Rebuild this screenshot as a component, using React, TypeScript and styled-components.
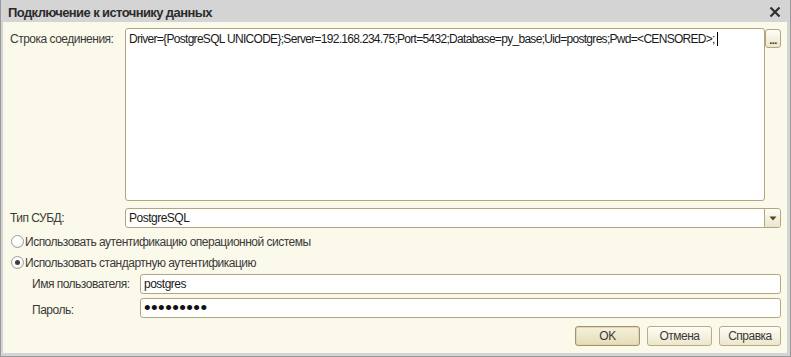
import React from 'react';
import styled, { createGlobalStyle } from 'styled-components';

const GlobalStyle = createGlobalStyle`
  html, body {
    margin: 0;
    padding: 0;
    background: #fbf9ea;
  }
  body {
    font-family: 'Liberation Sans', Arial, sans-serif;
    font-size: 12px;
    letter-spacing: -0.5px;
    color: #333333;
  }
`;

const connectionString =
  'Driver={PostgreSQL UNICODE};Server=192.168.234.75;Port=5432;Database=py_base;Uid=postgres;Pwd=<CENSORED>;';

const App = () => {
  return (
    <>
      <GlobalStyle />
      <Window>
        <TitleBar>
          <Title>Подключение к источнику данных</Title>
          <CloseButton aria-label="close">
            <svg width="12" height="12" viewBox="0 0 12 12">
              <path d="M1.5 1.5 L10.5 10.5 M10.5 1.5 L1.5 10.5" stroke="#2f2f2f" strokeWidth="2.2" />
            </svg>
          </CloseButton>
        </TitleBar>
        <Body>
          <Row>
            <Label $width={115} $top={4}>Строка соединения:</Label>
            <TextArea>
              {connectionString}
              <Caret />
            </TextArea>
            <SideButton>...</SideButton>
          </Row>

          <Row $mt={7}>
            <Label $width={115} $top={3}>Тип СУБД:</Label>
            <Select>
              <SelectValue>PostgreSQL</SelectValue>
              <DropButton>
                <svg width="8" height="5" viewBox="0 0 8 5">
                  <path d="M0.5 0.5 L7.5 0.5 L4 4.5 Z" fill="#5c430c" />
                </svg>
              </DropButton>
            </Select>
          </Row>

          <RadioRow $mt={6}>
            <Radio />
            Использовать аутентификацию операционной системы
          </RadioRow>
          <RadioRow $mt={6}>
            <Radio $checked />
            Использовать стандартную аутентификацию
          </RadioRow>

          <Row $mt={4} $indent={22}>
            <Label $width={108} $top={3}>Имя пользователя:</Label>
            <Input>postgres</Input>
          </Row>
          <Row $mt={4} $indent={22}>
            <Label $width={108} $top={5}>Пароль:</Label>
            <Input>
              <Dots>•••••••••</Dots>
            </Input>
          </Row>

          <ButtonBar>
            <DialogButton $default $width={65}>OK</DialogButton>
            <DialogButton $width={65}>Отмена</DialogButton>
            <DialogButton $width={62}>Справка</DialogButton>
          </ButtonBar>
        </Body>
      </Window>
    </>
  );
};

const Window = styled.div`
  width: 791px;
  height: 357px;
  box-sizing: border-box;
  display: flex;
  flex-direction: column;
  background: #d4d4d4;
  border-left: 1px solid #9a9a9a;
  border-right: 1px solid #9a9a9a;
  border-bottom: 1px solid #9a9a9a;
  overflow: hidden;
`;

const TitleBar = styled.div`
  height: 22px;
  flex: none;
  display: flex;
  align-items: center;
  justify-content: space-between;
  padding: 0 8px 0 7px;
  background: #d4d4d4;
`;

const Title = styled.div`
  font-weight: bold;
  font-size: 13px;
  letter-spacing: -0.6px;
  color: #2b2b2b;
  padding-top: 2px;
`;

const CloseButton = styled.div`
  width: 14px;
  height: 14px;
  display: flex;
  align-items: center;
  justify-content: center;
  margin-top: 2px;
`;

const Body = styled.div`
  flex: 1;
  display: flex;
  flex-direction: column;
  margin: 0 3px 3px 2px;
  padding: 6px 6px 0 7px;
  background: #fbf9ea;
`;

const Row = styled.div<{ $mt?: number; $indent?: number }>`
  display: flex;
  align-items: flex-start;
  margin-top: ${(p) => p.$mt ?? 0}px;
  padding-left: ${(p) => p.$indent ?? 0}px;
`;

const Label = styled.div<{ $width: number; $top: number }>`
  width: ${(p) => p.$width}px;
  flex: none;
  padding-top: ${(p) => p.$top}px;
  line-height: 14px;
  color: #3a3a3a;
  white-space: nowrap;
`;

const fieldBox = `
  box-sizing: border-box;
  background: #ffffff;
  border: 1px solid #b3a67e;
  border-radius: 3px;
  color: #1a1a1a;
  line-height: 14px;
`;

const TextArea = styled.div`
  ${fieldBox}
  width: 640px;
  height: 173px;
  padding: 3px 3px;
  white-space: nowrap;
  overflow: hidden;
  letter-spacing: -0.7px;
`;

const Caret = styled.span`
  display: inline-block;
  width: 1px;
  height: 14px;
  margin-left: 2px;
  vertical-align: -3px;
  background: #000000;
`;

const smallButton = `
  box-sizing: border-box;
  border: 1px solid #b3a67e;
  border-radius: 3px;
  background: linear-gradient(#fefdf7, #ebe5cc);
  display: flex;
  align-items: center;
  justify-content: center;
`;

const SideButton = styled.div`
  ${smallButton}
  width: 16px;
  height: 19px;
  margin-top: 1px;
  font-weight: bold;
  font-size: 11px;
  color: #333333;
  padding-top: 2px;
  letter-spacing: -0.5px;
`;

const Select = styled.div`
  ${fieldBox}
  width: 656px;
  height: 20px;
  display: flex;
  align-items: stretch;
  justify-content: space-between;
  overflow: hidden;
`;

const SelectValue = styled.div`
  padding: 2px 3px;
`;

const DropButton = styled.div`
  ${smallButton}
  width: 16px;
  border-width: 0 0 0 1px;
  border-radius: 0 2px 2px 0;
`;

const RadioRow = styled.div<{ $mt: number }>`
  display: flex;
  align-items: center;
  height: 15px;
  margin-top: ${(p) => p.$mt}px;
  margin-left: 1px;
  color: #3a3a3a;
  white-space: nowrap;
`;

const Radio = styled.span<{ $checked?: boolean }>`
  box-sizing: border-box;
  width: 13px;
  height: 13px;
  margin-right: 1px;
  border-radius: 50%;
  border: 1px solid #9c9c9c;
  background: radial-gradient(circle at 40% 35%, #ffffff 40%, #e6e6e6);
  display: flex;
  align-items: center;
  justify-content: center;

  &::after {
    content: '';
    display: ${(p) => (p.$checked ? 'block' : 'none')};
    width: 5px;
    height: 5px;
    border-radius: 50%;
    background: #3d3d3d;
  }
`;

const Input = styled.div`
  ${fieldBox}
  width: 641px;
  height: 20px;
  padding: 2px 3px;
  overflow: hidden;
`;

const Dots = styled.span`
  display: block;
  font-size: 19px;
  line-height: 14px;
  letter-spacing: 0.4px;
  color: #111111;
`;

const ButtonBar = styled.div`
  display: flex;
  justify-content: flex-end;
  gap: 7px;
  margin-top: 8px;
`;

const DialogButton = styled.div<{ $width: number; $default?: boolean }>`
  box-sizing: border-box;
  width: ${(p) => p.$width}px;
  height: 20px;
  display: flex;
  align-items: center;
  justify-content: center;
  border: 1px solid ${(p) => (p.$default ? '#a2946a' : '#b8ac86')};
  border-radius: 3px;
  background: ${(p) =>
    p.$default ? 'linear-gradient(#f5f1dc, #e5dcb8)' : 'linear-gradient(#fefdf7, #ece6cd)'};
  box-shadow: ${(p) => (p.$default ? 'inset 0 0 0 1px #e0d6b0' : 'none')};
  color: #3a3a3a;
`;

export default App;
